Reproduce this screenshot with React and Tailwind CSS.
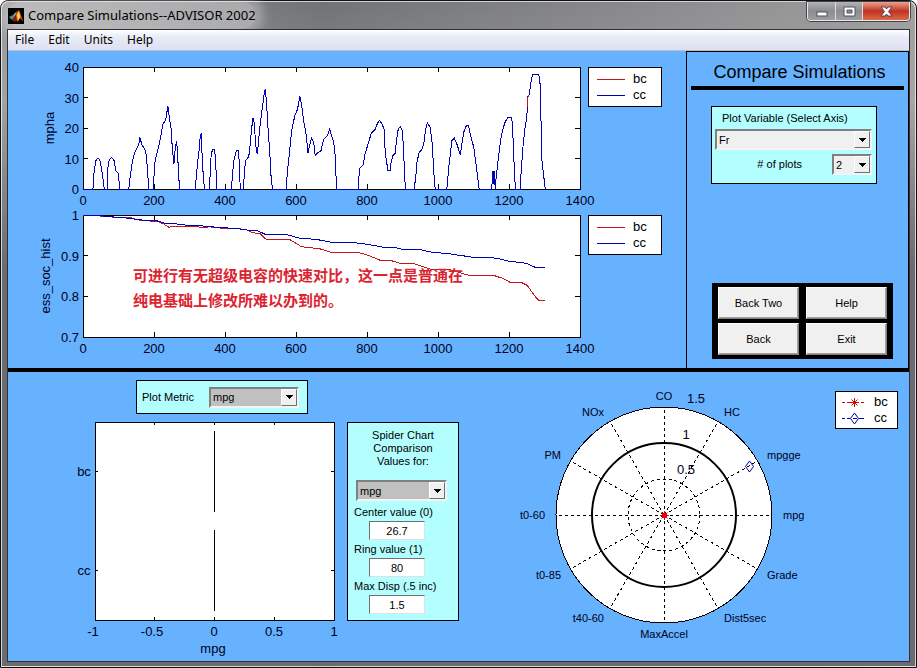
import React, { useState } from "react";
import clsx from "clsx";

const RED = "#c8141c";
const BLUE = "#0000b4";

const speed = [
  [0, 0], [28, 0], [31, 5.2], [36, 9.2], [40, 9.9], [47, 9.8], [52, 6.8], [56, 3.6], [60, 0],
  [68, 0], [70, 6.8], [73, 9.2], [80, 10.4], [88, 9.3], [92, 6], [99, 5.2], [104, 0],
  [129, 0], [133, 4.1], [139, 9], [146, 12], [157, 14.5], [160, 17], [166, 14.5], [174, 13], [178, 11.2], [182, 5.8], [185, 0],
  [198, 0], [201, 6.3], [203, 9.2], [212, 13.4], [220, 17.7], [225, 21.3], [233, 22.6], [239, 27.2], [243, 23.7], [248, 19.9],
  [251, 14.5], [256, 8.2], [260, 13.4], [264, 15.8], [267, 10.1], [270, 3.6], [272, 0],
  [316, 0], [319, 3.6], [323, 9], [328, 13.4], [330, 17.2], [333, 18.3], [335, 12.3], [338, 5.8], [342, 0],
  [356, 0], [359, 6.8], [361, 11.2], [365, 13], [371, 13], [374, 7.9], [377, 0],
  [418, 0], [422, 5.8], [426, 10], [432, 12.6], [438, 12.6], [440, 9], [443, 0],
  [452, 0], [455, 6.3], [458, 9.2], [467, 10.7], [471, 14.5], [475, 19.9], [479, 23.2], [483, 21.5], [486, 14.5], [491, 11.4],
  [497, 18.8], [500, 22], [505, 26.4], [510, 30.8], [513, 32.7], [517, 28.6], [520, 22], [526, 12.3], [530, 3.6], [534, 0],
  [572, 0], [576, 5.8], [582, 12.3], [588, 19.3], [597, 24.2], [604, 26], [611, 30.3], [616, 27.5], [622, 22], [628, 18.3],
  [634, 11.7], [639, 14.7], [644, 16.6], [650, 15.3], [654, 10.9], [662, 12], [670, 12.4], [676, 15.5], [680, 16.6],
  [688, 17.5], [695, 19.6], [701, 17.2], [706, 15.5], [710, 11.2], [713, 3.6], [715, 0],
  [776, 0], [777, 3.6], [780, 6.8], [789, 7.9], [795, 11.7], [805, 15.5], [812, 18.3], [823, 19.6], [830, 21.7], [836, 22.5],
  [842, 21.3], [848, 19.7], [850, 14.5], [853, 10.7], [859, 6], [865, 6], [868, 9], [873, 10.9], [879, 11.7], [884, 16.6],
  [888, 19.7], [894, 20.4], [900, 19], [903, 12.3], [907, 2.5], [909, 0],
  [933, 0], [938, 4.7], [941, 9], [947, 12], [954, 12.8], [960, 15], [965, 19.3], [970, 21.8], [978, 20.1], [984, 14.5],
  [988, 5.8], [992, 0],
  [1025, 0], [1030, 6.8], [1035, 11.7], [1039, 15.8], [1046, 16.7], [1054, 14.5], [1063, 11.2], [1067, 14.5], [1073, 18.8],
  [1080, 20.8], [1086, 20.9], [1092, 17.4], [1101, 13.6], [1106, 9], [1111, 4.7], [1116, 0],
  [1151, 0], [1155, 5.8], [1158, 1.4], [1159, 5.9], [1161, 0], [1164, 4], [1171, 11.2], [1178, 17.2], [1187, 21.3],
  [1192, 22.6], [1198, 23.5], [1207, 23.5], [1210, 21], [1213, 11.2], [1218, 0],
  [1231, 0], [1235, 6.8], [1239, 13.4], [1245, 19.9], [1250, 23.2], [1253, 30.2], [1257, 31], [1262, 35.1], [1266, 37.5],
  [1283, 37.5], [1287, 36.2], [1290, 23.2], [1293, 9], [1298, 4.1], [1302, 0],
];

const speedBc = [[1251, 26.8], [1252, 28], [1254, 30.8]];

const socCc = [
  [0, 1], [40, 0.999], [75, 0.996], [103, 0.994], [131, 0.992], [160, 0.988], [207, 0.986], [230, 0.98], [254, 0.979],
  [291, 0.975], [338, 0.973], [385, 0.969], [432, 0.967], [469, 0.962], [493, 0.961], [512, 0.953], [577, 0.951],
  [610, 0.943], [657, 0.94], [700, 0.933], [756, 0.933], [800, 0.928], [845, 0.921], [878, 0.92], [897, 0.916],
  [948, 0.915], [991, 0.907], [1028, 0.906], [1047, 0.902], [1066, 0.901], [1085, 0.897], [1164, 0.894], [1207, 0.885],
  [1230, 0.884], [1249, 0.881], [1277, 0.87], [1300, 0.87],
];

const socBc = [
  [0, 1], [40, 0.998], [84, 0.995], [131, 0.994], [160, 0.987], [211, 0.984], [225, 0.979], [242, 0.97], [254, 0.972],
  [319, 0.972], [333, 0.969], [357, 0.971], [385, 0.968], [432, 0.967], [460, 0.964], [479, 0.956], [498, 0.955],
  [514, 0.941], [582, 0.94], [601, 0.93], [615, 0.922], [667, 0.917], [695, 0.909], [775, 0.908], [800, 0.902],
  [836, 0.889], [864, 0.889], [897, 0.88], [934, 0.88], [977, 0.867], [1028, 0.867], [1052, 0.861], [1085, 0.852],
  [1155, 0.852], [1183, 0.844], [1202, 0.835], [1235, 0.834], [1251, 0.827], [1277, 0.796], [1284, 0.79], [1300, 0.79],
];

const spiderAxes = [
  { label: "mpg", angle: 0, x: 324, y: 147, anchor: "start" },
  { label: "mpgge", angle: 30, x: 308, y: 87, anchor: "start" },
  { label: "HC", angle: 60, x: 265, y: 44, anchor: "start" },
  { label: "CO", angle: 90, x: 205, y: 28, anchor: "middle" },
  { label: "NOx", angle: 120, x: 145, y: 44, anchor: "end" },
  { label: "PM", angle: 150, x: 102, y: 87, anchor: "end" },
  { label: "t0-60", angle: 180, x: 86, y: 147, anchor: "end" },
  { label: "t0-85", angle: 210, x: 102, y: 207, anchor: "end" },
  { label: "t40-60", angle: 240, x: 145, y: 250, anchor: "end" },
  { label: "MaxAccel", angle: 270, x: 205, y: 266, anchor: "middle" },
  { label: "Dist5sec", angle: 300, x: 265, y: 250, anchor: "start" },
  { label: "Grade", angle: 330, x: 308, y: 207, anchor: "start" },
];

const plotFont = "font-['Liberation_Sans',Arial,sans-serif]";

function TimePlot({ title, min, max, ticks, series }) {
  const left = 75;
  const top = 9;
  const width = 497;
  const height = 122;
  const px = (v) => left + (v / 1400) * width;
  const py = (v) => top + height - ((v - min) / (max - min)) * height;
  const xTicks = [0, 200, 400, 600, 800, 1000, 1200, 1400];

  return (
    <svg viewBox="0 0 580 148" className={clsx("block w-full overflow-visible text-[13px]", plotFont)} role="img" aria-label={title}>
      <rect x={left} y={top} width={width} height={height} fill="#fff" />
      <g shapeRendering="crispEdges" stroke="#000" fill="none">
        <rect x={left} y={top} width={width} height={height} />
        {xTicks.map((t) => (
          <path key={t} d={`M${px(t)} ${top}v5M${px(t)} ${top + height}v-5`} />
        ))}
        {ticks.map((t) => (
          <path key={t} d={`M${left} ${py(t)}h5M${left + width} ${py(t)}h-5`} />
        ))}
        {series.map((s, i) => (
          <polyline key={i} stroke={s.color} points={s.data.map(([x, y]) => `${px(x)},${py(y)}`).join(" ")} />
        ))}
      </g>
      {xTicks.map((t) => (
        <text key={t} x={px(t)} y={top + height + 16} textAnchor="middle" fill="#000020">{t}</text>
      ))}
      {ticks.map((t) => (
        <text key={t} x={left - 4} y={py(t) + 5} textAnchor="end" fill="#000020">{t}</text>
      ))}
      <text transform={`translate(${max > 1 ? 46 : 42} ${top + height / 2}) rotate(-90)`} textAnchor="middle" fill="#000020">
        {title}
      </text>
    </svg>
  );
}

function LineLegend() {
  return (
    <div className={clsx("flex h-10 w-[74px] flex-col justify-center border border-black bg-white text-[13px] leading-4", plotFont)}>
      {[["bc", "bg-[#c8141c]"], ["cc", "bg-[#0000b4]"]].map(([name, color]) => (
        <div key={name} className="flex items-center gap-2 pl-2">
          <span className={clsx("h-px w-7", color)} />
          <span>{name}</span>
        </div>
      ))}
    </div>
  );
}

function Combo({ label, options, className, dark }) {
  return (
    <div className={clsx("relative h-[21px] border-2 border-t-[#808080] border-l-[#808080] border-r-[#f4f4f4] border-b-[#f4f4f4]", className)}>
      <select
        aria-label={label}
        className={clsx("block h-full w-full appearance-none pl-0.5 leading-4 outline-none", dark ? "bg-[#c0c0c0]" : "bg-[#f0f0f0]")}
      >
        {options.map((o) => <option key={o}>{o}</option>)}
      </select>
      <span className="pointer-events-none absolute inset-y-0 right-0 flex w-4 items-center justify-center border border-t-white border-l-white border-r-[#707070] border-b-[#707070] bg-[#f0f0f0]">
        <svg width="7" height="4" viewBox="0 0 7 4" shapeRendering="crispEdges"><path d="M0 0h7L3.5 4z" /></svg>
      </span>
    </div>
  );
}

function Field({ id, label, initial }) {
  const [value, setValue] = useState(initial);
  return (
    <div className="flex flex-col">
      <label htmlFor={id} className="leading-[18px]">{label}</label>
      <input
        id={id}
        value={value}
        onChange={(e) => setValue(e.target.value)}
        className="ml-[15px] h-[19px] w-14 border border-t-[#707070] border-l-[#707070] border-r-[#e0e0e0] border-b-[#e0e0e0] bg-white text-center outline-none"
      />
    </div>
  );
}

function PushButton({ children }) {
  return (
    <button className="h-8 border border-t-white border-l-white border-r-[#808080] border-b-[#808080] bg-[#f0f0f0] shadow-[inset_-1px_-1px_0_#a0a0a0]">
      {children}
    </button>
  );
}

function BarPlot() {
  return (
    <svg viewBox="0 0 339 235" className={clsx("mt-2 block w-full overflow-visible text-[13px]", plotFont)} role="img" aria-label="mpg by vehicle">
      <g shapeRendering="crispEdges" stroke="#000" fill="none">
        <rect x="87" y="0" width="239" height="198" fill="#fff" />
        <path d="M146.500 0v3M206.500 0v3M266.500 0v3M146.500 198v-3M206.500 198v-3M266.500 198v-3" />
        <path d="M87 49.500h3M326 49.500h-3M87 148.500h3M326 148.500h-3" />
        <path d="M206.500 9v81M206.500 108v81" />
      </g>
      <g fill="#000020" textAnchor="middle">
        <text x="85" y="214">-1</text>
        <text x="144" y="214">-0.5</text>
        <text x="206" y="214">0</text>
        <text x="266" y="214">0.5</text>
        <text x="326" y="214">1</text>
        <text x="205" y="231">mpg</text>
        <text x="76" y="54">bc</text>
        <text x="76" y="153">cc</text>
      </g>
    </svg>
  );
}

function SpiderPlot() {
  const cx = 205;
  const cy = 143;
  return (
    <svg viewBox="0 0 376 280" className={clsx("block w-full overflow-visible text-[11px]", plotFont)} role="img" aria-label="Spider chart">
      <g fill="none" stroke="#000" shapeRendering="crispEdges">
        <circle cx={cx} cy={cy} r="108" fill="#fff" />
        <circle cx={cx} cy={cy} r="36" strokeDasharray="3 3" />
        {spiderAxes.map(({ angle }) => {
          const a = (angle * Math.PI) / 180;
          return (
            <line key={angle} x1={cx} y1={cy} x2={cx + 108 * Math.cos(a)} y2={cy - 108 * Math.sin(a)} strokeDasharray="3 3" />
          );
        })}
      </g>
      <circle cx={cx} cy={cy} r="72" fill="none" stroke="#000" strokeWidth="2" />
      <rect x={cx - 2} y={cy - 2} width="5" height="5" fill="#e00000" />
      <StarMark x={cx} y={cy} />
      <DiamondMark x={290} y={94} />
      <g fill="#000020">
        {spiderAxes.map((axis) => (
          <text key={axis.label} x={axis.x} y={axis.y} textAnchor={axis.anchor}>{axis.label}</text>
        ))}
        <g className="text-[13px]" textAnchor="middle">
          <text x="227" y="102">0.5</text>
          <text x="227" y="67">1</text>
          <text x="237" y="31">1.5</text>
        </g>
      </g>
    </svg>
  );
}

function StarMark({ x, y }) {
  return (
    <path
      d={`M${x - 4} ${y + 0.5}h9M${x + 0.5} ${y - 4}v9M${x - 2.5} ${y - 2.5}l6 6M${x + 3.5} ${y - 2.5}l-6 6`}
      stroke="#e00000"
      strokeWidth="1"
    />
  );
}

function DiamondMark({ x, y }) {
  return <path d={`M${x + 0.5} ${y - 5}l4 5.500l-4 5.500l-4 -5.500z`} fill="none" stroke={BLUE} />;
}

function MarkerLegend() {
  return (
    <div className={clsx("mt-[19px] flex h-[38px] w-[63px] flex-col justify-center border border-black bg-white text-[13px] leading-4", plotFont)}>
      <div className="flex items-center gap-2.5 pl-1.5">
        <svg width="22" height="12" viewBox="0 0 22 12">
          <path d="M0 6.500h3M5 6.500h12M19 6.500h3" stroke="#e00000" shapeRendering="crispEdges" />
          <StarMark x={12} y={6} />
        </svg>
        <span>bc</span>
      </div>
      <div className="flex items-center gap-2.5 pl-1.5">
        <svg width="22" height="12" viewBox="0 0 22 12">
          <path d="M0 6.500h3M5 6.500h3M11 6.500h4M17 6.500h5" stroke={BLUE} shapeRendering="crispEdges" />
          <DiamondMark x={12} y={6} />
        </svg>
        <span>cc</span>
      </div>
    </div>
  );
}

function TitleBar() {
  return (
    <header className="flex h-[27px] items-start justify-between">
      <div className="flex h-[27px] items-center gap-1 rounded-full bg-white/35 pl-px shadow-[0_0_10px_8px_rgba(255,255,255,0.28)]">
        <svg width="16" height="16" viewBox="0 0 16 16">
          <path fill="#000" d="M0 0h16v16H0z" />
          <path fill="#4b8f98" d="M1 9l4-2 2 2-3 3z" />
          <path fill="#7ab0b4" d="M5 7l4-4-2 6z" />
          <path fill="#8b1a08" d="M4 12l3-4 3-6 1 7-4 5z" />
          <path fill="#f05a10" d="M8 6l3-4 4 11-3-3-3 4z" />
          <path fill="#ffe04a" d="M9 7l2-4 1 6-2 4z" />
        </svg>
        <h1 className="font-['Noto_Sans',sans-serif] text-[13px]">Compare Simulations--ADVISOR 2002</h1>
      </div>
      <div className="flex h-[19px] overflow-hidden rounded-b border border-t-0 border-[#e8e8e8] shadow-[0_0_0_1px_#444]">
        <button aria-label="Minimize" className="flex w-7 items-center justify-center border-r border-[#ddd] bg-linear-to-b from-[#b4b4b4] via-[#8a8c90] via-50% to-[#9c9ea2]">
          <svg width="12" height="14"><rect x="1" y="8" width="10" height="4" fill="#fff" stroke="#50525c" /></svg>
        </button>
        <button aria-label="Maximize" className="flex w-[27px] items-center justify-center border-r border-[#ddd] bg-linear-to-b from-[#b4b4b4] via-[#8a8c90] via-50% to-[#9c9ea2]">
          <svg width="13" height="11">
            <path fill="#fff" stroke="#50525c" fillRule="evenodd" d="M1 1h11v9H1zM4 4v3h5V4z" />
          </svg>
        </button>
        <button aria-label="Close" className="flex w-[46px] items-center justify-center bg-linear-to-b from-[#e8a090] via-[#c03020] via-50% to-[#d86848]">
          <svg width="13" height="11">
            <path d="M1 1h4l1.500 2L8 1h4L8.500 5.500 12 10H8L6.500 8 5 10H1l3.500-4.500z" fill="#fff" stroke="#5a4048" />
          </svg>
        </button>
      </div>
    </header>
  );
}

export default function App() {
  return (
    <div className="flex min-h-screen flex-col rounded-t-lg border border-[#101018] bg-linear-to-r from-[#9a9a9a] via-[#727377] via-35% to-[#a0a0a0] font-['Liberation_Sans',Arial,sans-serif] text-[11px] text-black">
      <div className="flex grow flex-col rounded-t-lg border border-white/70 bg-linear-to-b from-transparent via-[#b0b0b0]/40 via-15% to-[#6c6c70] to-40% px-[5px] pb-1">
        <TitleBar />
        <div className="flex grow flex-col border border-[#303038] bg-[#66b2ff]">
          <nav className="flex h-[21px] items-center gap-[14px] border-b border-[#c0c0c8] bg-linear-to-b from-white via-[#e8ecf6] via-35% to-[#dde0f2] pl-[7px] font-['Noto_Sans',sans-serif] text-[12px]">
            {["File", "Edit", "Units", "Help"].map((item) => <button key={item}>{item}</button>)}
          </nav>

          <section className="flex border-b-4 border-black">
            <div className="min-w-0 grow pt-[7px] pb-[14px]">
              <div className="flex items-start">
                <div className="min-w-0 grow">
                  <TimePlot
                    title="mpha"
                    min={0}
                    max={40}
                    ticks={[0, 10, 20, 30, 40]}
                    series={[{ color: BLUE, data: speed }, { color: RED, data: speedBc }]}
                  />
                </div>
                <div className="mt-[9px] mr-6"><LineLegend /></div>
              </div>
              <div className="flex items-start">
                <div className="relative min-w-0 grow">
                  <TimePlot
                    title="ess_soc_hist"
                    min={0.7}
                    max={1}
                    ticks={[0.7, 0.8, 0.9, 1]}
                    series={[{ color: RED, data: socBc }, { color: BLUE, data: socCc }]}
                  />
                  <p className="absolute top-[56px] left-[125px] font-['Noto_Sans_CJK_SC',sans-serif] text-[15px] leading-[25px] font-bold whitespace-nowrap text-[#dc2430]">
                    可进行有无超级电容的快速对比，这一点是普通在<br />纯电基础上修改所难以办到的。
                  </p>
                </div>
                <div className="mt-[9px] mr-6"><LineLegend /></div>
              </div>
            </div>

            <aside className="flex w-[223px] shrink-0 flex-col border border-b-0 border-black px-1 pb-[9px]">
              <h2 className="border-b-4 border-black pt-2 pb-0.5 pl-1 text-center text-[18px] leading-6">Compare Simulations</h2>
              <div className="mt-4 mr-[27px] ml-5 h-[78px] border border-black bg-[#b3ffff] pr-1 pl-[3px]">
                <p className="pl-[7px] leading-[22px]">Plot Variable (Select Axis)</p>
                <Combo label="Plot variable" options={["Fr"]} />
                <div className="mt-1 flex items-center justify-end gap-[30px]">
                  <span># of plots</span>
                  <Combo label="Number of plots" options={["2", "1", "3", "4"]} className="w-10" />
                </div>
              </div>
              <div className="mt-auto mr-[11px] ml-[21px] grid grid-cols-2 gap-x-[7px] gap-y-1 bg-black px-[6px] py-1">
                <PushButton>Back Two</PushButton>
                <PushButton>Help</PushButton>
                <PushButton>Back</PushButton>
                <PushButton>Exit</PushButton>
              </div>
            </aside>
          </section>

          <section className="grid grow grid-cols-[339fr_112px_376fr_74px] items-start">
            <div className="pt-2">
              <div className="ml-32 flex h-[34px] w-[172px] items-center justify-between border border-black bg-[#b3ffff] pr-2 pl-[5px]">
                <span>Plot Metric</span>
                <Combo label="Plot metric" options={["mpg"]} className="w-[90px]" dark />
              </div>
              <BarPlot />
            </div>

            <div className="mt-[50px] flex h-[199px] flex-col border border-black bg-[#b3ffff] px-1.5 pt-1.5">
              <p className="px-4 text-center leading-[13px]">Spider Chart Comparison Values for:</p>
              <Combo label="Spider chart metric" options={["mpg"]} className="mt-3 mb-0.5 ml-0.5 w-[91px]" dark />
              <Field id="center" label="Center value (0)" initial="26.7" />
              <Field id="ring" label="Ring value (1)" initial="80" />
              <Field id="disp" label="Max Disp (.5 inc)" initial="1.5" />
            </div>

            <SpiderPlot />
            <MarkerLegend />
          </section>
        </div>
      </div>
    </div>
  );
}
